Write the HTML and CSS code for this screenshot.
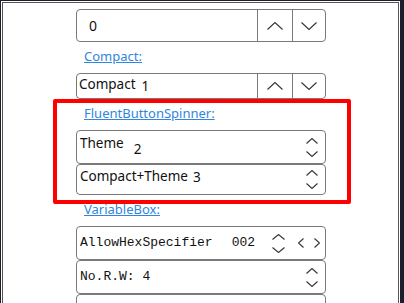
FILE: index.html
```html
<!DOCTYPE html>
<html lang="en">
<head>
    <meta charset="UTF-8"/>
    <title>Spinner samples</title>
    <link rel="stylesheet" href="styles.css">
</head>
<body>
<div class="window">
    <div class="frame">
        <div class="col">
            <div class="spin big">
                <div class="field"><span class="num">0</span></div>
                <button class="btn first"><svg width="16" height="8" viewBox="0 0 16 8"><polyline points="0.5,7.5 8,0.5 15.5,7.5"/></svg></button>
                <button class="btn"><svg width="16" height="8" viewBox="0 0 16 8"><polyline points="0.5,0.5 8,7.5 15.5,0.5"/></svg></button>
            </div>

            <a class="link" href="#">Compact:</a>
            <div class="spin compact">
                <div class="field"><span>Compact</span><span class="val v1">1</span></div>
                <button class="btn first"><svg width="16" height="8" viewBox="0 0 16 8"><polyline points="0.5,7.5 8,0.5 15.5,7.5"/></svg></button>
                <button class="btn"><svg width="16" height="8" viewBox="0 0 16 8"><polyline points="0.5,0.5 8,7.5 15.5,0.5"/></svg></button>
            </div>

            <a class="link" href="#">FluentButtonSpinner:</a>
            <div class="fbox theme">
                <div class="field"><span>Theme</span><span class="val v2">2</span></div>
                <div class="arrows">
                    <svg width="12" height="6" viewBox="0 0 12 6"><polyline points="0.5,5.5 6,0.5 11.5,5.5"/></svg>
                    <svg width="12" height="6" viewBox="0 0 12 6"><polyline points="0.5,0.5 6,5.5 11.5,0.5"/></svg>
                </div>
            </div>
            <div class="fbox ct">
                <div class="field"><span>Compact+Theme</span><span class="val v3">3</span></div>
                <div class="arrows">
                    <svg width="12" height="6" viewBox="0 0 12 6"><polyline points="0.5,5.5 6,0.5 11.5,5.5"/></svg>
                    <svg width="12" height="6" viewBox="0 0 12 6"><polyline points="0.5,0.5 6,5.5 11.5,0.5"/></svg>
                </div>
            </div>

            <a class="link" href="#">VariableBox:</a>
            <div class="fbox mono">
                <div class="field"><span>AllowHexSpecifier</span><span class="hex">002</span></div>
                <div class="arrows">
                    <svg width="13" height="6" viewBox="0 0 13 6"><polyline points="0.5,5.5 6.5,0.5 12.5,5.5"/></svg>
                    <svg width="13" height="6" viewBox="0 0 13 6"><polyline points="0.5,0.5 6.5,5.5 12.5,0.5"/></svg>
                </div>
                <div class="lr">
                    <svg width="6" height="10" viewBox="0 0 6 10"><polyline points="5.5,0.5 0.5,5 5.5,9.5"/></svg>
                    <svg width="6" height="10" viewBox="0 0 6 10"><polyline points="0.5,0.5 5.5,5 0.5,9.5"/></svg>
                </div>
            </div>
            <div class="fbox mono">
                <div class="field"><span>No.R.W: 4</span></div>
                <div class="arrows">
                    <svg width="12" height="6" viewBox="0 0 12 6"><polyline points="0.5,5.5 6,0.5 11.5,5.5"/></svg>
                    <svg width="12" height="6" viewBox="0 0 12 6"><polyline points="0.5,0.5 6,5.5 11.5,0.5"/></svg>
                </div>
            </div>
            <div class="fbox mono rest"></div>
        </div>
    </div>
</div>
<div class="mark"></div>
</body>
</html>
```

FILE: styles.css
```css
html, body { margin: 0; height: 100%; overflow: hidden; }
body { background: #1b1e2b; font-family: "Noto Sans", sans-serif; color: #111; position: relative; }

.window { margin: 1px 0 0 1px; width: 399px; height: 320px; background: #fff; padding: 1px; box-sizing: border-box; }
.frame { border: 1px solid #555; border-bottom: 0; height: 100%; box-sizing: border-box; }
.col { display: flex; flex-direction: column; width: 250px; margin-left: 73px; padding-top: 6px; }

svg { display: block; fill: none; stroke: #333; stroke-width: 1.1; }

.spin { display: flex; border: 1px solid #7a7a7a; border-radius: 4px; box-sizing: border-box; }
.spin .field { flex: 1; display: flex; }
.btn { border: 0; border-left: 1px solid #7a7a7a; background: none; padding: 0; width: 33px; display: flex; align-items: center; justify-content: center; }
.btn.first { width: 35px; }

.big { height: 33px; }
.big .field { align-items: center; padding-left: 12px; }
.num { font-size: 14px; }

.compact { height: 26px; }
.compact .field { font-size: 13.5px; line-height: 18px; padding: 1px 2px 0; }

.link { display: block; margin: 4px 0 7px 8px; font-size: 13px; line-height: 20px; color: #2f86e0; text-decoration: underline; align-self: flex-start; }

.fbox { display: flex; align-items: center; border: 1px solid #7a7a7a; border-radius: 4px; box-sizing: border-box; padding-right: 7px; }
.fbox .field { flex: 1; align-self: flex-start; font-size: 13.5px; line-height: 18px; padding: 2px 3px 0; }
.theme { height: 34px; }
.theme .field { padding-top: 3px; }
.ct { height: 31px; }

.val { display: inline-block; }
.v1 { margin-left: 6px; position: relative; top: 2px; }
.v2 { margin-left: 10px; position: relative; top: 6px; }
.v3 { margin-left: 5px; position: relative; top: 1px; }

.arrows { display: flex; flex-direction: column; gap: 7px; }

.mono { height: 34px; }
.mono .field { align-self: center; font-family: "Liberation Mono", monospace; font-size: 13px; padding-top: 0; }
.hex { margin-left: 19px; }
.mono + .mono { margin-top: 0; }
.lr { display: flex; gap: 10px; margin-left: 13px; margin-right: -2px; }
.rest { margin-top: 1px; }

/* red annotation over the FluentButtonSpinner block */
.mark { position: absolute; left: 53px; top: 99px; width: 298px; height: 105px; border: 4px solid #f00; border-radius: 2px; box-sizing: border-box; }
```
